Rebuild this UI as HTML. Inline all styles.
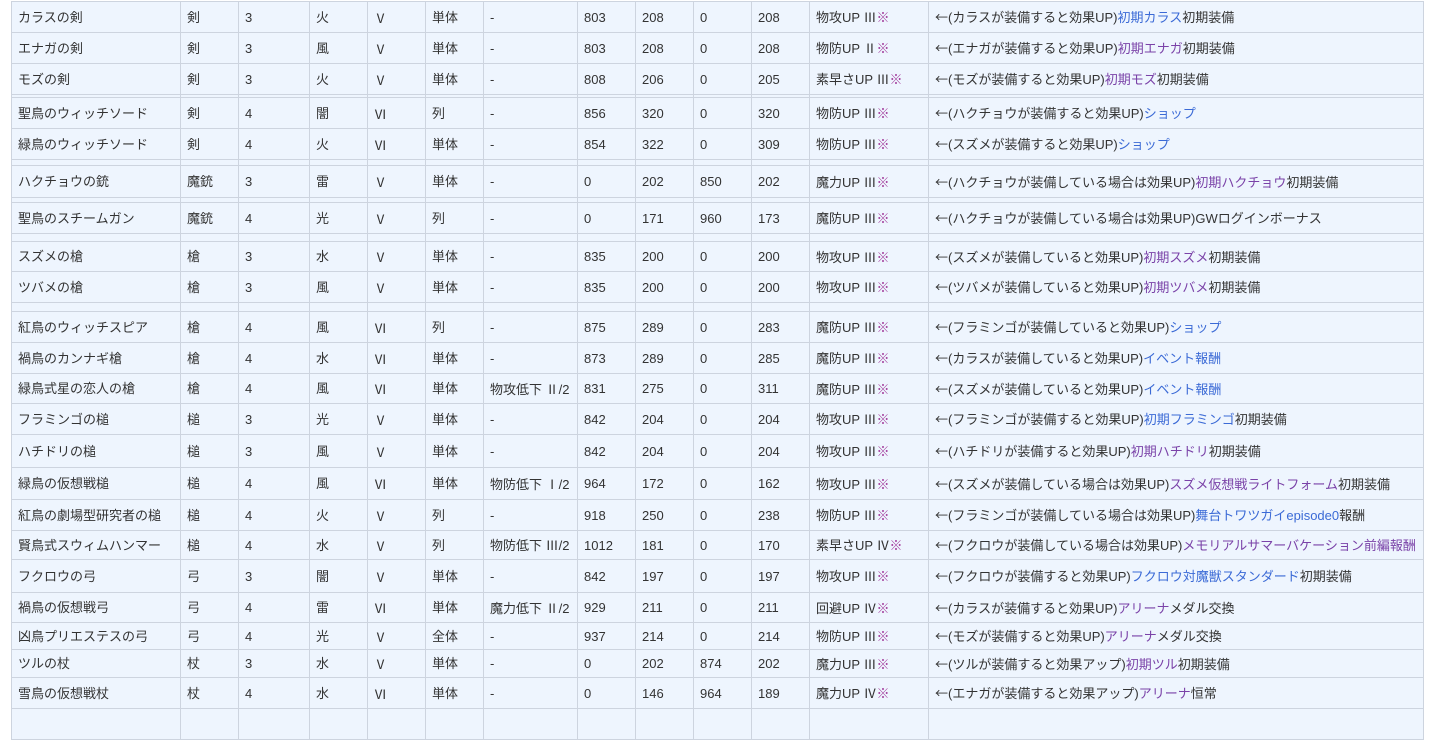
<!DOCTYPE html>
<html><head><meta charset="utf-8"><style>
body{margin:0;background:#fff;width:1450px;height:720px;overflow:hidden;font-family:"Liberation Sans","Noto Sans CJK JP",sans-serif;font-size:13px;color:#333}
table{position:absolute;left:11px;top:1px;border-collapse:collapse;table-layout:fixed;width:1413px;background:#eef5fe}
td{border:1px solid #cdd4df;padding:0 0 0 6px;white-space:nowrap;overflow:hidden;vertical-align:middle;line-height:15px}
tr.s td{padding:0}
.b{color:#3b6ad6}.p{color:#7a42a8}.k{color:#a0389a}
.j{font-family:"Noto Sans CJK JP",sans-serif}
</style></head><body>
<table>
<colgroup><col style="width:169px"><col style="width:58px"><col style="width:71px"><col style="width:58px"><col style="width:58px"><col style="width:58px"><col style="width:94px"><col style="width:58px"><col style="width:58px"><col style="width:58px"><col style="width:58px"><col style="width:119px"><col style="width:495px"></colgroup>
<tr style="height:31px"><td>カラスの剣</td><td>剣</td><td>3</td><td>火</td><td class="j">Ⅴ</td><td>単体</td><td>-</td><td>803</td><td>208</td><td>0</td><td>208</td><td>物攻UP <span class="j">Ⅲ</span><span class="k">※</span></td><td><span class="j">←</span>(カラスが装備すると効果UP)<span class="b">初期カラス</span>初期装備</td></tr>
<tr style="height:31px"><td>エナガの剣</td><td>剣</td><td>3</td><td>風</td><td class="j">Ⅴ</td><td>単体</td><td>-</td><td>803</td><td>208</td><td>0</td><td>208</td><td>物防UP <span class="j">Ⅱ</span><span class="k">※</span></td><td><span class="j">←</span>(エナガが装備すると効果UP)<span class="p">初期エナガ</span>初期装備</td></tr>
<tr style="height:31px"><td>モズの剣</td><td>剣</td><td>3</td><td>火</td><td class="j">Ⅴ</td><td>単体</td><td>-</td><td>808</td><td>206</td><td>0</td><td>205</td><td>素早さUP <span class="j">Ⅲ</span><span class="k">※</span></td><td><span class="j">←</span>(モズが装備すると効果UP)<span class="p">初期モズ</span>初期装備</td></tr>
<tr class="s" style="height:3px"><td></td><td></td><td></td><td></td><td></td><td></td><td></td><td></td><td></td><td></td><td></td><td></td><td></td></tr>
<tr style="height:31px"><td>聖鳥のウィッチソード</td><td>剣</td><td>4</td><td>闇</td><td class="j">Ⅵ</td><td>列</td><td>-</td><td>856</td><td>320</td><td>0</td><td>320</td><td>物防UP <span class="j">Ⅲ</span><span class="k">※</span></td><td><span class="j">←</span>(ハクチョウが装備すると効果UP)<span class="b">ショップ</span></td></tr>
<tr style="height:31px"><td>緑鳥のウィッチソード</td><td>剣</td><td>4</td><td>火</td><td class="j">Ⅵ</td><td>単体</td><td>-</td><td>854</td><td>322</td><td>0</td><td>309</td><td>物防UP <span class="j">Ⅲ</span><span class="k">※</span></td><td><span class="j">←</span>(スズメが装備すると効果UP)<span class="b">ショップ</span></td></tr>
<tr class="s" style="height:6px"><td></td><td></td><td></td><td></td><td></td><td></td><td></td><td></td><td></td><td></td><td></td><td></td><td></td></tr>
<tr style="height:32px"><td>ハクチョウの銃</td><td>魔銃</td><td>3</td><td>雷</td><td class="j">Ⅴ</td><td>単体</td><td>-</td><td>0</td><td>202</td><td>850</td><td>202</td><td>魔力UP <span class="j">Ⅲ</span><span class="k">※</span></td><td><span class="j">←</span>(ハクチョウが装備している場合は効果UP)<span class="p">初期ハクチョウ</span>初期装備</td></tr>
<tr class="s" style="height:5px"><td></td><td></td><td></td><td></td><td></td><td></td><td></td><td></td><td></td><td></td><td></td><td></td><td></td></tr>
<tr style="height:31px"><td>聖鳥のスチームガン</td><td>魔銃</td><td>4</td><td>光</td><td class="j">Ⅴ</td><td>列</td><td>-</td><td>0</td><td>171</td><td>960</td><td>173</td><td>魔防UP <span class="j">Ⅲ</span><span class="k">※</span></td><td><span class="j">←</span>(ハクチョウが装備している場合は効果UP)GWログインボーナス</td></tr>
<tr class="s" style="height:8px"><td></td><td></td><td></td><td></td><td></td><td></td><td></td><td></td><td></td><td></td><td></td><td></td><td></td></tr>
<tr style="height:30px"><td>スズメの槍</td><td>槍</td><td>3</td><td>水</td><td class="j">Ⅴ</td><td>単体</td><td>-</td><td>835</td><td>200</td><td>0</td><td>200</td><td>物攻UP <span class="j">Ⅲ</span><span class="k">※</span></td><td><span class="j">←</span>(スズメが装備していると効果UP)<span class="p">初期スズメ</span>初期装備</td></tr>
<tr style="height:31px"><td>ツバメの槍</td><td>槍</td><td>3</td><td>風</td><td class="j">Ⅴ</td><td>単体</td><td>-</td><td>835</td><td>200</td><td>0</td><td>200</td><td>物攻UP <span class="j">Ⅲ</span><span class="k">※</span></td><td><span class="j">←</span>(ツバメが装備していると効果UP)<span class="p">初期ツバメ</span>初期装備</td></tr>
<tr class="s" style="height:9px"><td></td><td></td><td></td><td></td><td></td><td></td><td></td><td></td><td></td><td></td><td></td><td></td><td></td></tr>
<tr style="height:31px"><td>紅鳥のウィッチスピア</td><td>槍</td><td>4</td><td>風</td><td class="j">Ⅵ</td><td>列</td><td>-</td><td>875</td><td>289</td><td>0</td><td>283</td><td>魔防UP <span class="j">Ⅲ</span><span class="k">※</span></td><td><span class="j">←</span>(フラミンゴが装備していると効果UP)<span class="b">ショップ</span></td></tr>
<tr style="height:31px"><td>禍鳥のカンナギ槍</td><td>槍</td><td>4</td><td>水</td><td class="j">Ⅵ</td><td>単体</td><td>-</td><td>873</td><td>289</td><td>0</td><td>285</td><td>魔防UP <span class="j">Ⅲ</span><span class="k">※</span></td><td><span class="j">←</span>(カラスが装備していると効果UP)<span class="b">イベント報酬</span></td></tr>
<tr style="height:30px"><td>緑鳥式星の恋人の槍</td><td>槍</td><td>4</td><td>風</td><td class="j">Ⅵ</td><td>単体</td><td>物攻低下 <span class="j">Ⅱ</span>/2</td><td>831</td><td>275</td><td>0</td><td>311</td><td>魔防UP <span class="j">Ⅲ</span><span class="k">※</span></td><td><span class="j">←</span>(スズメが装備していると効果UP)<span class="b">イベント報酬</span></td></tr>
<tr style="height:31px"><td>フラミンゴの槌</td><td>槌</td><td>3</td><td>光</td><td class="j">Ⅴ</td><td>単体</td><td>-</td><td>842</td><td>204</td><td>0</td><td>204</td><td>物攻UP <span class="j">Ⅲ</span><span class="k">※</span></td><td><span class="j">←</span>(フラミンゴが装備すると効果UP)<span class="b">初期フラミンゴ</span>初期装備</td></tr>
<tr style="height:33px"><td>ハチドリの槌</td><td>槌</td><td>3</td><td>風</td><td class="j">Ⅴ</td><td>単体</td><td>-</td><td>842</td><td>204</td><td>0</td><td>204</td><td>物攻UP <span class="j">Ⅲ</span><span class="k">※</span></td><td><span class="j">←</span>(ハチドリが装備すると効果UP)<span class="p">初期ハチドリ</span>初期装備</td></tr>
<tr style="height:32px"><td>緑鳥の仮想戦槌</td><td>槌</td><td>4</td><td>風</td><td class="j">Ⅵ</td><td>単体</td><td>物防低下 <span class="j">Ⅰ</span>/2</td><td>964</td><td>172</td><td>0</td><td>162</td><td>物攻UP <span class="j">Ⅲ</span><span class="k">※</span></td><td><span class="j">←</span>(スズメが装備している場合は効果UP)<span class="p">スズメ仮想戦ライトフォーム</span>初期装備</td></tr>
<tr style="height:31px"><td>紅鳥の劇場型研究者の槌</td><td>槌</td><td>4</td><td>火</td><td class="j">Ⅴ</td><td>列</td><td>-</td><td>918</td><td>250</td><td>0</td><td>238</td><td>物防UP <span class="j">Ⅲ</span><span class="k">※</span></td><td><span class="j">←</span>(フラミンゴが装備している場合は効果UP)<span class="b">舞台トワツガイepisode0</span>報酬</td></tr>
<tr style="height:29px"><td>賢鳥式スウィムハンマー</td><td>槌</td><td>4</td><td>水</td><td class="j">Ⅴ</td><td>列</td><td>物防低下 <span class="j">Ⅲ</span>/2</td><td>1012</td><td>181</td><td>0</td><td>170</td><td>素早さUP <span class="j">Ⅳ</span><span class="k">※</span></td><td><span class="j">←</span>(フクロウが装備している場合は効果UP)<span class="p">メモリアルサマーバケーション前編報酬</span></td></tr>
<tr style="height:33px"><td>フクロウの弓</td><td>弓</td><td>3</td><td>闇</td><td class="j">Ⅴ</td><td>単体</td><td>-</td><td>842</td><td>197</td><td>0</td><td>197</td><td>物攻UP <span class="j">Ⅲ</span><span class="k">※</span></td><td><span class="j">←</span>(フクロウが装備すると効果UP)<span class="b">フクロウ対魔獣スタンダード</span>初期装備</td></tr>
<tr style="height:30px"><td>禍鳥の仮想戦弓</td><td>弓</td><td>4</td><td>雷</td><td class="j">Ⅵ</td><td>単体</td><td>魔力低下 <span class="j">Ⅱ</span>/2</td><td>929</td><td>211</td><td>0</td><td>211</td><td>回避UP <span class="j">Ⅳ</span><span class="k">※</span></td><td><span class="j">←</span>(カラスが装備すると効果UP)<span class="p">アリーナ</span>メダル交換</td></tr>
<tr style="height:27px"><td>凶鳥プリエステスの弓</td><td>弓</td><td>4</td><td>光</td><td class="j">Ⅴ</td><td>全体</td><td>-</td><td>937</td><td>214</td><td>0</td><td>214</td><td>物防UP <span class="j">Ⅲ</span><span class="k">※</span></td><td><span class="j">←</span>(モズが装備すると効果UP)<span class="p">アリーナ</span>メダル交換</td></tr>
<tr style="height:28px"><td>ツルの杖</td><td>杖</td><td>3</td><td>水</td><td class="j">Ⅴ</td><td>単体</td><td>-</td><td>0</td><td>202</td><td>874</td><td>202</td><td>魔力UP <span class="j">Ⅲ</span><span class="k">※</span></td><td><span class="j">←</span>(ツルが装備すると効果アップ)<span class="p">初期ツル</span>初期装備</td></tr>
<tr style="height:31px"><td>雪鳥の仮想戦杖</td><td>杖</td><td>4</td><td>水</td><td class="j">Ⅵ</td><td>単体</td><td>-</td><td>0</td><td>146</td><td>964</td><td>189</td><td>魔力UP <span class="j">Ⅳ</span><span class="k">※</span></td><td><span class="j">←</span>(エナガが装備すると効果アップ)<span class="p">アリーナ</span>恒常</td></tr>
<tr style="height:31px"><td>&nbsp;</td><td></td><td></td><td></td><td></td><td></td><td></td><td></td><td></td><td></td><td></td><td></td><td></td></tr>
</table>
</body></html>
